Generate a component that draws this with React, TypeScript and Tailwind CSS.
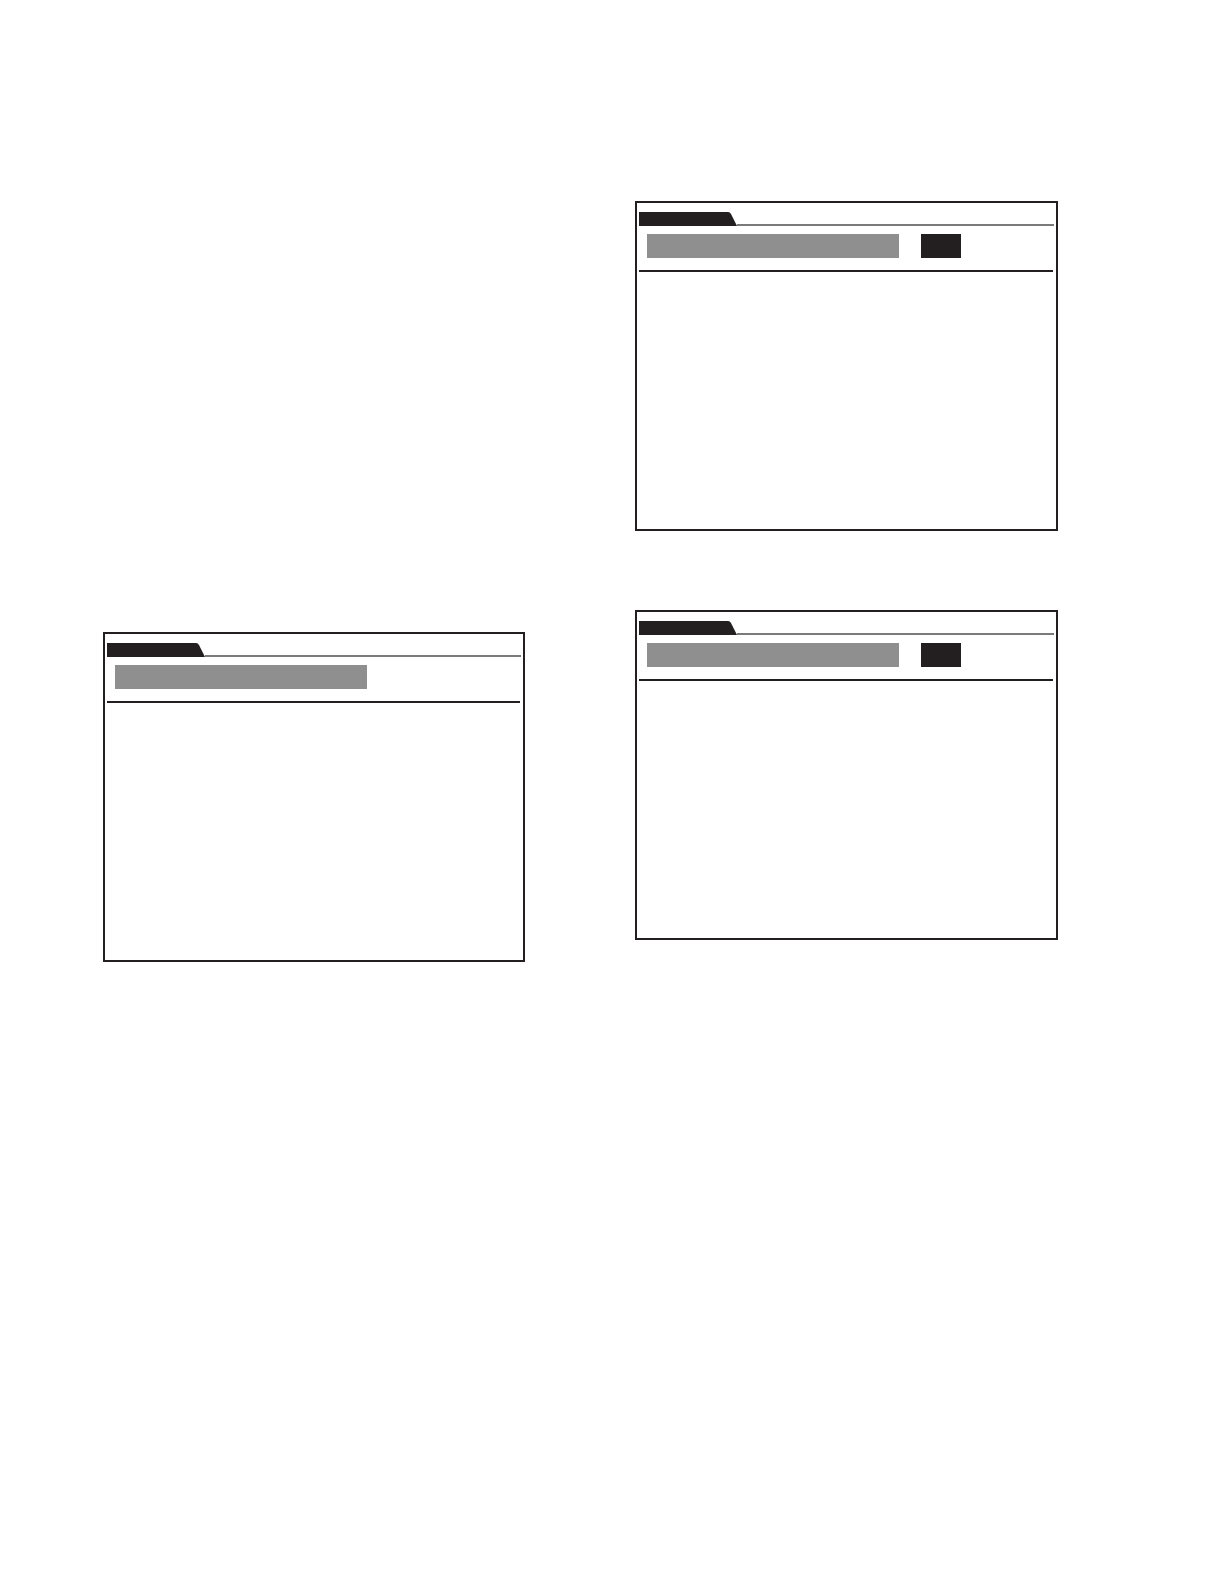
// Three blank screen panels — tab header, field bar, optional button

function Tab() {
  return (
    <svg width="98" height="14" viewBox="0 0 98 14" className="block shrink-0">
      <path d="M0 0 H89 Q91 0 92 2 L98 14 H0 Z" fill="#231f20" />
    </svg>
  )
}

function Panel({ withButton = false, className = 'w-[423px]' }: { withButton?: boolean; className?: string }) {
  return (
    <div className={`h-[330px] border-2 border-[#231f20] bg-white pt-[9px] px-[2px] ${className}`}>
      {/* tab row */}
      <div className="flex items-end">
        <Tab />
        <div className="flex-1 h-[2px] bg-[#7a7a7a]" />
      </div>

      {/* field row */}
      <div className="flex items-center gap-[22px] pl-[8px] mt-[8px]">
        <div className="w-[252px] h-[24px] bg-[#8f8f8f]" />
        {withButton && <div className="w-[40px] h-[24px] bg-[#231f20]" />}
      </div>

      {/* divider */}
      <div className="h-[2px] bg-[#231f20] mt-[12px] mr-[1px]" />
    </div>
  )
}

export default function App() {
  return (
    <div className="w-[1219px] h-[1587px] bg-white flex font-['Liberation_Sans',sans-serif]">
      <div className="pl-[103px] pt-[632px]">
        <Panel className="w-[422px]" />
      </div>
      <div className="pl-[110px] pt-[201px] flex flex-col gap-[79px]">
        <Panel withButton />
        <Panel withButton />
      </div>
    </div>
  )
}
